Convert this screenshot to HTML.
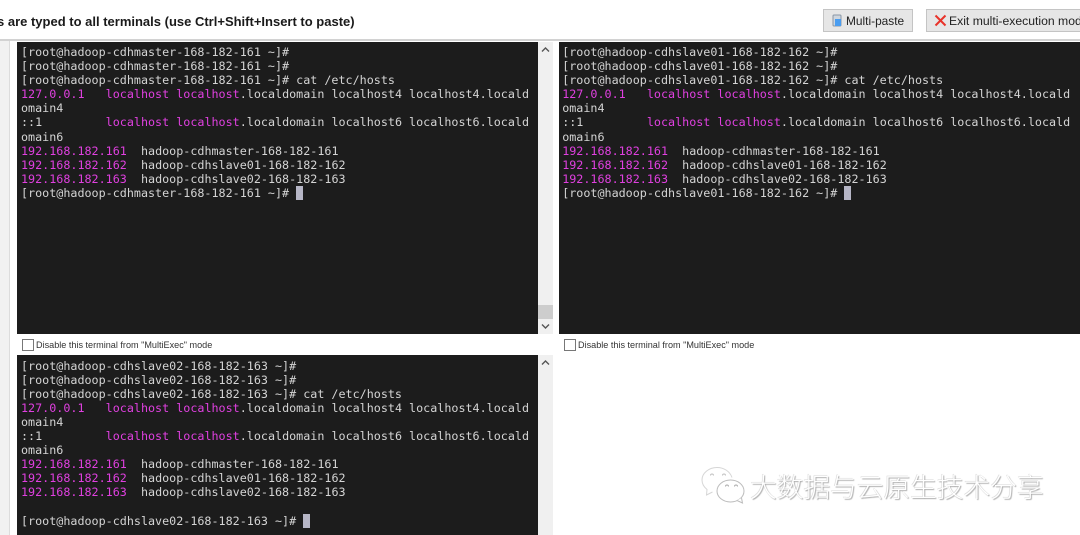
<!DOCTYPE html>
<html><head><meta charset="utf-8"><style>
html,body{margin:0;padding:0;background:#fff}
#p{position:relative;width:1080px;height:535px;overflow:hidden;background:#fff;font-family:"Liberation Sans",sans-serif}
#p>*{position:absolute}
.title{left:-3px;top:14px;font-size:13px;font-weight:bold;color:#1a1a1a;white-space:nowrap}
.btn{background:#e6e6e6;border:1px solid #c4c4c4;box-sizing:border-box;height:23px;top:9px;font:11.9px/23px "Liberation Sans",sans-serif;color:#222;white-space:nowrap;overflow:hidden}
.term{background:#1c1c1c;overflow:hidden;font:11.73px/14px "DejaVu Sans Mono",monospace;color:#d4d4d4;white-space:pre;box-sizing:border-box;padding:3px 0 0 4px}
.term div{height:14px}
.a div:nth-child(6){height:15px}
.b div:nth-child(11){height:15px}
.m{color:#e040e0}
.cur{display:inline-block;width:7px;height:14px;background:#b6b6c6;vertical-align:-3px}
.sb{background:#f0f0f0;width:15px}
.cb{width:10px;height:10px;border:1px solid #777;background:#fff;box-sizing:content-box}
.lab{font:9.1px/12px "Liberation Sans",sans-serif;color:#333;white-space:nowrap}
.wm{left:750px;top:470px;font:26.7px/32px "Noto Sans CJK SC",sans-serif;font-weight:300;color:#fff;white-space:nowrap;text-shadow:1px 1px 1px #aaa,-.5px -.5px .5px #d4d4d4}
</style></head><body><div id="p">
<div class="title">s are typed to all terminals (use Ctrl+Shift+Insert to paste)</div>
<div class="btn" style="left:823px;width:90px;padding-left:22px">Multi-paste</div>
<svg style="left:832px;top:14px" width="11" height="13" viewBox="0 0 11 13"><rect x="1" y="1" width="8" height="11" rx="1" fill="#cfd6de" stroke="#8a97a5"/><rect x="3" y="5" width="6" height="7" fill="#4a9df0"/></svg>
<div class="btn" style="left:926px;width:170px;padding-left:22px;font-size:12.2px">Exit multi-execution mode</div>
<svg style="left:934px;top:14px" width="13" height="13" viewBox="0 0 13 13"><path d="M1.5 1.5L11.5 11.5M11.5 1.5L1.5 11.5" stroke="#e8332a" stroke-width="2"/></svg>
<div style="left:0;top:41px;width:9px;height:494px;background:#f1f1f1"></div>
<div style="left:0;top:39px;width:1080px;height:2px;background:#d2d2d2"></div>
<div style="left:9px;top:41px;width:1px;height:494px;background:#dcdcdc"></div>

<div class="term a" style="left:17px;top:42px;width:521px;height:292px"><div>[root@hadoop-cdhmaster-168-182-161 ~]#</div><div>[root@hadoop-cdhmaster-168-182-161 ~]#</div><div>[root@hadoop-cdhmaster-168-182-161 ~]# cat /etc/hosts</div><div><span class="m">127.0.0.1</span>   <span class="m">localhost localhost</span>.localdomain localhost4 localhost4.locald</div><div>omain4</div><div>::1         <span class="m">localhost localhost</span>.localdomain localhost6 localhost6.locald</div><div>omain6</div><div><span class="m">192.168.182.161</span>  hadoop-cdhmaster-168-182-161</div><div><span class="m">192.168.182.162</span>  hadoop-cdhslave01-168-182-162</div><div><span class="m">192.168.182.163</span>  hadoop-cdhslave02-168-182-163</div><div>[root@hadoop-cdhmaster-168-182-161 ~]# <span class="cur"></span></div></div>
<div class="sb" style="left:538px;top:42px;height:292px"></div>
<div style="left:538px;top:305px;width:15px;height:14px;background:#cdcdcd"></div>
<svg style="left:538px;top:42px" width="15" height="15"><path d="M4 9.5L7.5 6L11 9.5" fill="none" stroke="#555" stroke-width="1.4"/></svg>
<svg style="left:538px;top:319px" width="15" height="15"><path d="M4 5.5L7.5 9L11 5.5" fill="none" stroke="#555" stroke-width="1.4"/></svg>

<div class="term a" style="left:559px;top:42px;width:521px;height:292px;padding-left:3.2px"><div>[root@hadoop-cdhslave01-168-182-162 ~]#</div><div>[root@hadoop-cdhslave01-168-182-162 ~]#</div><div>[root@hadoop-cdhslave01-168-182-162 ~]# cat /etc/hosts</div><div><span class="m">127.0.0.1</span>   <span class="m">localhost localhost</span>.localdomain localhost4 localhost4.locald</div><div>omain4</div><div>::1         <span class="m">localhost localhost</span>.localdomain localhost6 localhost6.locald</div><div>omain6</div><div><span class="m">192.168.182.161</span>  hadoop-cdhmaster-168-182-161</div><div><span class="m">192.168.182.162</span>  hadoop-cdhslave01-168-182-162</div><div><span class="m">192.168.182.163</span>  hadoop-cdhslave02-168-182-163</div><div>[root@hadoop-cdhslave01-168-182-162 ~]# <span class="cur"></span></div></div>

<div class="cb" style="left:22px;top:339px"></div>
<div class="lab" style="left:36px;top:339px">Disable this terminal from "MultiExec" mode</div>
<div class="cb" style="left:564px;top:339px"></div>
<div class="lab" style="left:578px;top:339px">Disable this terminal from "MultiExec" mode</div>

<div class="term b" style="left:17px;top:355px;width:521px;height:180px;padding-top:4px"><div>[root@hadoop-cdhslave02-168-182-163 ~]#</div><div>[root@hadoop-cdhslave02-168-182-163 ~]#</div><div>[root@hadoop-cdhslave02-168-182-163 ~]# cat /etc/hosts</div><div><span class="m">127.0.0.1</span>   <span class="m">localhost localhost</span>.localdomain localhost4 localhost4.locald</div><div>omain4</div><div>::1         <span class="m">localhost localhost</span>.localdomain localhost6 localhost6.locald</div><div>omain6</div><div><span class="m">192.168.182.161</span>  hadoop-cdhmaster-168-182-161</div><div><span class="m">192.168.182.162</span>  hadoop-cdhslave01-168-182-162</div><div><span class="m">192.168.182.163</span>  hadoop-cdhslave02-168-182-163</div><div> </div><div>[root@hadoop-cdhslave02-168-182-163 ~]# <span class="cur"></span></div></div>
<div class="sb" style="left:538px;top:355px;height:180px"></div>
<svg style="left:538px;top:355px" width="15" height="15"><path d="M4 9.5L7.5 6L11 9.5" fill="none" stroke="#555" stroke-width="1.4"/></svg>

<svg style="left:700px;top:466px" width="48" height="40" viewBox="0 0 48 40"><path d="M17 1.5C9 1.5 2 7 2 14c0 4 2 7 5 9.5L6.5 29l6-3" fill="#fff" stroke="#d6d6d6" stroke-width="1"/><path d="M17 1.5c7 0 13 4 15 10" fill="none" stroke="#d6d6d6"/><ellipse cx="30.500" cy="25" rx="13.500" ry="11" fill="#fff" stroke="#bcbcbc"/><path d="M37 34.500l5.500 2.500-1-5" fill="#fff" stroke="#bcbcbc"/><path d="M10.500 9.500a1.500 1.500 0 0 1 3 0M22.500 9.500a1.500 1.500 0 0 1 3 0" fill="none" stroke="#c0c0c0"/><path d="M25.500 20.500a1.500 1.500 0 0 1 3 0M34.500 20.500a1.500 1.500 0 0 1 3 0" fill="none" stroke="#aaa"/></svg>
<div class="wm">大数据与云原生技术分享</div>
</div></body></html>
